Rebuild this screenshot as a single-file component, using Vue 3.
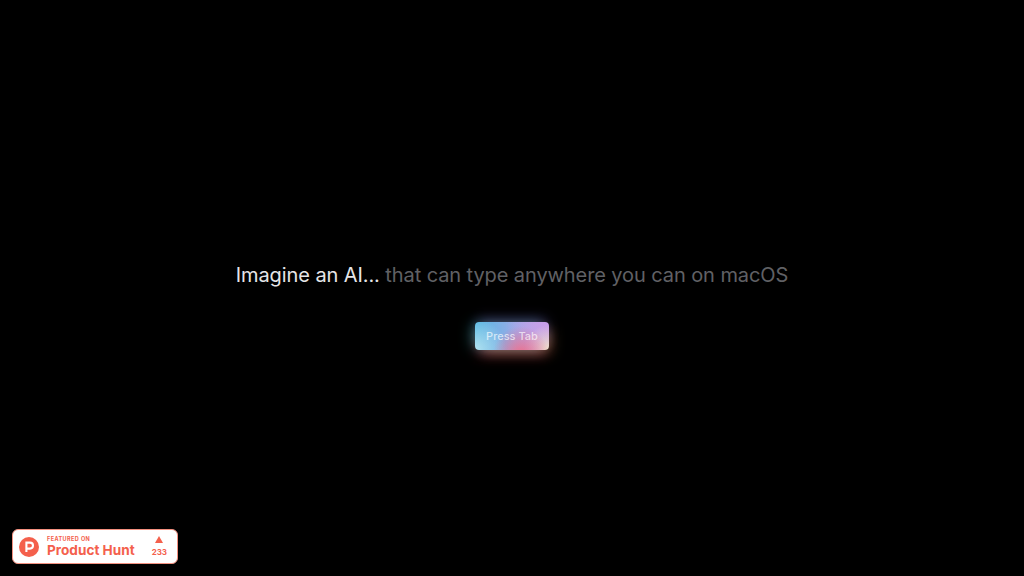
<script setup>
const votes = 233;
</script>

<template>
  <div class="page">
    <h1 class="headline">Imagine an AI... <span class="muted">that can type anywhere you can on macOS</span></h1>
    <button class="tab-btn">Press Tab</button>

    <a class="badge">
      <svg class="ph-logo" viewBox="0 0 20 20">
        <circle cx="10" cy="10" r="10" fill="#f4604c" />
        <path d="M7.4 15V5.6h3.6a3 3 0 0 1 0 6H7.4" fill="none" stroke="#fff" stroke-width="2.1" />
      </svg>
      <div class="badge-text">
        <span class="featured">FEATURED ON</span>
        <span class="ph-name">Product Hunt</span>
      </div>
      <div class="votes">
        <span class="triangle"></span>
        <span class="count">{{ votes }}</span>
      </div>
    </a>
  </div>
</template>

<style>
html, body {
  margin: 0;
  background: #000;
}
</style>

<style scoped>
.page {
  height: 576px;
  background: #000;
  display: flex;
  flex-direction: column;
  align-items: center;
  justify-content: center;
  gap: 32px;
  padding-top: 34px;
  box-sizing: border-box;
  font-family: Inter, "Liberation Sans", sans-serif;
  overflow: hidden;
  position: relative;
}
.headline {
  margin: 0;
  font-size: 20px;
  line-height: 30px;
  font-weight: 400;
  letter-spacing: -0.09px;
  color: #e6e6e8;
  white-space: nowrap;
}
.muted {
  color: #606165;
}
.tab-btn {
  width: 74px;
  height: 28px;
  padding: 0;
  border: none;
  border-radius: 4px;
  font-family: inherit;
  font-size: 11px;
  font-weight: 500;
  color: rgba(255, 255, 255, 0.66);
  background:
    radial-gradient(circle at 62% 115%, #f0708c 0%, rgba(240, 112, 140, 0) 50%),
    radial-gradient(circle at 100% 100%, #f0dfc8 0%, rgba(240, 223, 200, 0) 32%),
    radial-gradient(circle at 100% 0%, #c79eea 0%, rgba(199, 158, 234, 0) 55%),
    radial-gradient(circle at 0% 100%, #b4e2f0 0%, rgba(180, 226, 240, 0) 40%),
    linear-gradient(90deg, #55b8e2 0%, #98abe8 55%, #cda4e6 100%);
  box-shadow:
    -5px 0 14px -2px rgba(50, 210, 200, 0.42),
    0 -5px 14px -3px rgba(150, 110, 235, 0.42),
    5px 5px 14px -3px rgba(235, 175, 90, 0.38),
    0 7px 14px -3px rgba(235, 60, 100, 0.5);
}
.badge {
  position: absolute;
  left: 12px;
  top: 529px;
  width: 166px;
  height: 35px;
  box-sizing: border-box;
  display: flex;
  align-items: center;
  padding: 0 10px 0 6px;
  background: #fff;
  border: 1px solid #f3907f;
  border-radius: 6px;
  color: #f4604c;
}
.ph-logo {
  width: 20px;
  height: 20px;
  flex: none;
}
.badge-text {
  display: flex;
  flex-direction: column;
  margin-left: 8px;
  flex: 1;
}
.featured {
  font-size: 5.5px;
  line-height: 7px;
  font-weight: 700;
  letter-spacing: 0.42px;
}
.ph-name {
  font-size: 13.6px;
  line-height: 15px;
  font-weight: 700;
  white-space: nowrap;
}
.votes {
  display: flex;
  flex-direction: column;
  align-items: center;
  gap: 5px;
}
.triangle {
  width: 0;
  height: 0;
  border-left: 4.5px solid transparent;
  border-right: 4.5px solid transparent;
  border-bottom: 7px solid #f4604c;
}
.count {
  font-size: 8px;
  line-height: 9px;
  font-weight: 700;
}
</style>
